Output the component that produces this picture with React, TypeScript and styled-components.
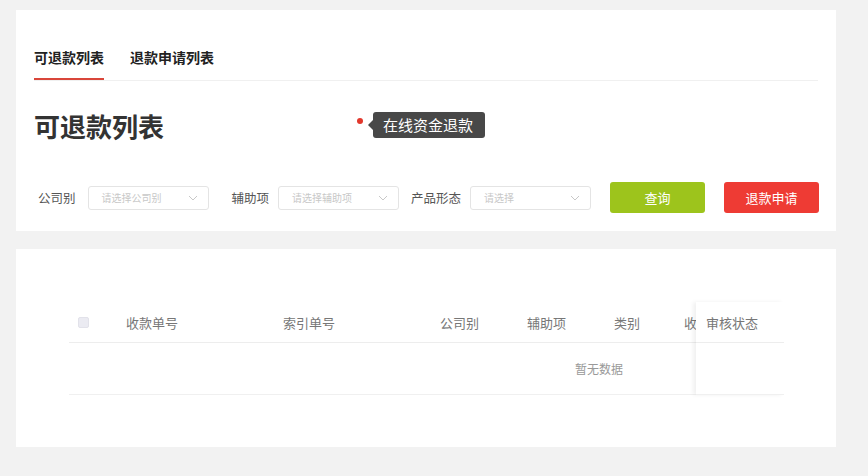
import { Fragment } from 'react'
import styled, { createGlobalStyle } from 'styled-components'

const GlobalStyle = createGlobalStyle`
  html, body {
    margin: 0;
    padding: 0;
    background: #f2f2f2;
    font-family: "Noto Sans CJK SC", "Noto Sans", sans-serif;
    color: #333;
  }
`

const Page = styled.div`
  width: 820px;
  padding: 10px 0 0 16px;
  display: flex;
  flex-direction: column;
  gap: 18px;
`

const Card = styled.div`
  background: #fff;
  box-sizing: border-box;
`

const FilterCard = styled(Card)`
  height: 221px;
  padding: 34px 18px 0;
`

const TabBar = styled.div`
  display: flex;
  gap: 26px;
  border-bottom: 1px solid #f0f0f0;
`

const Tab = styled.div<{ $active?: boolean }>`
  font-size: 14px;
  font-weight: 700;
  line-height: 26px;
  padding-bottom: 8px;
  color: #222;
  border-bottom: 2px solid ${(p) => (p.$active ? '#d9463a' : 'transparent')};
`

const TitleRow = styled.div`
  display: flex;
  align-items: center;
  height: 40px;
  margin-top: 25px;
`

const Title = styled.h1`
  margin: 0;
  font-size: 26px;
  font-weight: 700;
  color: #333;
  line-height: 40px;
`

const StatusMark = styled.div`
  display: flex;
  align-items: center;
  margin-left: 193px;
  margin-top: -3px;
`

const Dot = styled.span`
  width: 6px;
  height: 6px;
  border-radius: 50%;
  background: #e2382c;
  margin: 0 10px 8px 0;
`

const Tip = styled.span`
  position: relative;
  background: #484848;
  color: #fff;
  font-size: 15px;
  line-height: 26px;
  padding: 0 12px 0 10px;
  border-radius: 3px;

  &::before {
    content: '';
    position: absolute;
    left: -5px;
    top: 50%;
    margin-top: -5px;
    border-style: solid;
    border-width: 5px 5px 5px 0;
    border-color: transparent #484848 transparent transparent;
  }
`

const FilterRow = styled.div`
  display: flex;
  align-items: center;
  margin-top: 36px;
  padding-left: 4px;
  white-space: nowrap;
`

const FieldLabel = styled.span<{ $gap: number }>`
  flex: none;
  font-size: 12.5px;
  color: #555;
  margin-right: ${(p) => p.$gap}px;
`

const Select = styled.div<{ $after: number }>`
  flex: none;
  width: 121px;
  height: 24px;
  box-sizing: border-box;
  border: 1px solid #e4e4e4;
  border-radius: 3px;
  display: flex;
  align-items: center;
  justify-content: space-between;
  padding: 0 10px 0 13px;
  margin-right: ${(p) => p.$after}px;
  font-size: 10px;
  color: #c8c8c8;
`

const Button = styled.button<{ $color: string; $left?: number }>`
  flex: none;
  width: 95px;
  height: 31px;
  border: none;
  border-radius: 3px;
  background: ${(p) => p.$color};
  color: #fff;
  font-family: inherit;
  font-size: 13px;
  font-weight: 400;
  padding: 0;
  margin-left: ${(p) => p.$left ?? 0}px;
`

const TableCard = styled(Card)`
  height: 198px;
  padding: 53px 52px 0 53px;
`

const Table = styled.div`
  display: flex;
  width: 715px;
`

const ScrollPart = styled.div`
  flex: 1;
  overflow: hidden;
`

const FixedPart = styled.div`
  width: 88px;
  background: #fff;
  box-shadow: -3px 0 4px rgba(0, 0, 0, 0.06);
`

const HeadRow = styled.div`
  display: flex;
  height: 40px;
  align-items: center;
  border-bottom: 1px solid #ededed;
  white-space: nowrap;
`

const HeadCell = styled.div<{ $w: number }>`
  flex: 0 0 ${(p) => p.$w}px;
  overflow: hidden;
  font-size: 13px;
  color: #777;
`

const CheckCell = styled.div`
  flex: 0 0 57px;
  display: flex;
  align-items: center;
  padding-left: 9px;
  box-sizing: border-box;
`

const Checkbox = styled.span`
  width: 11px;
  height: 11px;
  border: 1px solid #e2e2ea;
  background: #ebebf2;
  border-radius: 2px;
  box-sizing: border-box;
`

const EmptyRow = styled.div<{ $pad: number }>`
  height: 51px;
  display: flex;
  align-items: center;
  padding-left: ${(p) => p.$pad}px;
  border-bottom: 1px solid #f0f0f0;
  font-size: 12px;
  color: #999;
`

const FixedHead = styled(HeadRow)`
  padding-left: 10px;
  font-size: 13px;
  color: #777;
`

const Chevron = () => (
  <svg width='10' height='6' viewBox='0 0 10 6'>
    <polyline points='1,1 5,5 9,1' fill='none' stroke='#c8c8c8' strokeWidth='1' />
  </svg>
)

const filters = [
  { label: '公司别', placeholder: '请选择公司别', labelGap: 12, after: 23 },
  { label: '辅助项', placeholder: '请选择辅助项', labelGap: 9, after: 12 },
  { label: '产品形态', placeholder: '请选择', labelGap: 9, after: 19 },
]

// the last one is cut off by the fixed status column
const columns = [
  { title: '收款单号', width: 157 },
  { title: '索引单号', width: 157 },
  { title: '公司别', width: 87 },
  { title: '辅助项', width: 87 },
  { title: '类别', width: 70 },
  { title: '收', width: 13 },
]

const App = () => {
  return (
    <>
      <GlobalStyle />
      <Page>
        <FilterCard>
          <TabBar>
            <Tab $active>可退款列表</Tab>
            <Tab>退款申请列表</Tab>
          </TabBar>
          <TitleRow>
            <Title>可退款列表</Title>
            <StatusMark>
              <Dot />
              <Tip>在线资金退款</Tip>
            </StatusMark>
          </TitleRow>
          <FilterRow>
            {filters.map((f) => (
              <Fragment key={f.label}>
                <FieldLabel $gap={f.labelGap}>{f.label}</FieldLabel>
                <Select $after={f.after}>
                  <span>{f.placeholder}</span>
                  <Chevron />
                </Select>
              </Fragment>
            ))}
            <Button $color='#9dc41c'>查询</Button>
            <Button $color='#ee3b34' $left={19}>
              退款申请
            </Button>
          </FilterRow>
        </FilterCard>

        <TableCard>
          <Table>
            <ScrollPart>
              <HeadRow>
                <CheckCell>
                  <Checkbox />
                </CheckCell>
                {columns.map((c) => (
                  <HeadCell $w={c.width} key={c.title}>
                    {c.title}
                  </HeadCell>
                ))}
              </HeadRow>
              <EmptyRow $pad={506}>暂无数据</EmptyRow>
            </ScrollPart>
            <FixedPart>
              <FixedHead>审核状态</FixedHead>
              <EmptyRow $pad={0} />
            </FixedPart>
          </Table>
        </TableCard>
      </Page>
    </>
  )
}

export default App
